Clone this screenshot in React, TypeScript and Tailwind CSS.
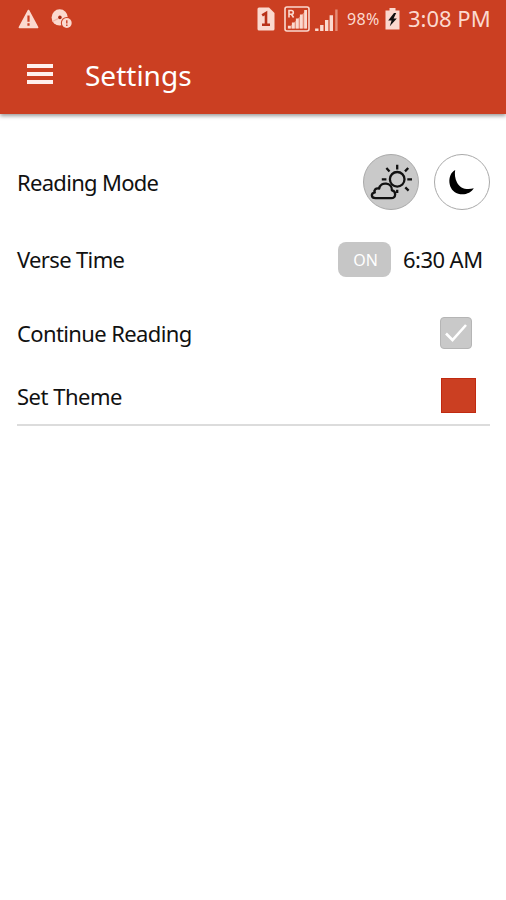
import { useState } from 'react'
import type React from 'react'

const WarningIcon = () => (
  <svg width="21" height="20" viewBox="0 0 21 20">
    <path d="M10.5 1.5L19.6 18.5H1.4Z" fill="#fbd9cf" stroke="#fbd9cf" strokeWidth="1.6" strokeLinejoin="round" />
    <path d="M10.5 6.5v6.2M10.5 14.3v2.4" stroke="#cb3f22" strokeWidth="2.2" />
  </svg>
)

const DiscIcon = () => (
  <svg width="22" height="20" viewBox="0 0 22 20">
    <circle cx="8.7" cy="8.4" r="8.1" fill="#fbd9cf" />
    <circle cx="8.9" cy="8.4" r="1.8" fill="#a92a14" />
    <path d="M1.5 12.5L7 9.6" stroke="#f0b3a4" strokeWidth="1.2" />
    <circle cx="15.8" cy="14" r="6" fill="#cb3f22" />
    <circle cx="15.8" cy="14" r="4.9" fill="#fbd9cf" />
    <path d="M15.8 11.2v3.4M15.8 15.4v1.6" stroke="#cb3f22" strokeWidth="1.4" />
  </svg>
)

const SimIcon = () => (
  <svg width="18" height="24" viewBox="0 0 18 24">
    <path d="M2 .5H12L17.5 6V22Q17.5 23.5 16 23.5H2Q.5 23.5 .5 22V2Q.5 .5 2 .5Z" fill="#fbd9cf" />
    <path d="M5.2 8.4L9 6V17.4M5 17.8H13" fill="none" stroke="#b93118" strokeWidth="2.6" />
  </svg>
)

const RoamingIcon = () => (
  <svg width="26" height="26" viewBox="0 0 26 26">
    <rect x="1" y="1" width="24" height="24" rx="2" fill="none" stroke="#fbd9cf" strokeWidth="1.6" />
    <path d="M5 11.5V4.5H7.4a1.8 1.8 0 0 1 0 3.8H5M7.4 8.3L9.6 11.5" fill="none" stroke="#fbd9cf" strokeWidth="1.6" />
    <path d="M4 22.5L22.5 4V22.5Z" fill="#e58b76" />
    <path d="M5.3 22.5V19.8M9.3 22.5V16.5M13.3 22.5V12.5M17.3 22.5V8.5M21.6 22.5V4" stroke="#fbd9cf" strokeWidth="2.8" />
  </svg>
)

const SignalIcon = () => (
  <svg width="23" height="23" viewBox="0 0 23 23">
    <path d="M1.8 22V19.5M6.8 22V16M11.7 22V11M16.3 22V6.2" stroke="#fbd9cf" strokeWidth="3.4" />
    <path d="M21.4 22V.5" stroke="#e58b76" strokeWidth="2.4" />
  </svg>
)

const BatteryIcon = () => (
  <svg width="15" height="22" viewBox="0 0 15 22">
    <path d="M4.5 0H10.5V2.5H14.5V21.5H.5V2.5H4.5Z" fill="#fbd9cf" />
    <path d="M9 5L3.2 12.4H6.6L4.8 18.2L11.8 10.4H8.6L11.2 5Z" fill="#111" />
  </svg>
)

const DayIcon = () => (
  <svg width="54" height="54" viewBox="1 1 54 54" fill="none" stroke="#111" strokeWidth="2.3">
    <circle cx="34.2" cy="25.3" r="7.3" />
    <path d="M34.2 10.8V15.6M34.2 35.8V39M18.8 25.3H23.4M44.3 25.3H49M23.4 14L26.5 17.4M45.2 14L42 17.4M42.3 33.4L45.6 36.6" />
    <path
      d="M12.5 44.2H28.2C33.2 44.2 33.5 37 28.9 36.4C29.4 28.3 17.5 27 16.2 34.6C12.5 33.8 10.8 36.3 11.8 38.4C7.6 39.4 8 44.2 12.5 44.2Z"
      fill="#c9c9c9"
      strokeLinejoin="round"
    />
  </svg>
)

const NightIcon = () => (
  <svg width="54" height="54" viewBox="1 1 54 54">
    <path d="M21.2 16C12.5 20.5 13.6 36.8 24.2 39.8C30.5 41.6 37.2 39 39.8 34.3C32.5 36.4 25.8 34.3 23 28.5C21 24.5 20.4 20 21.2 16Z" fill="#000" />
  </svg>
)

const StatusBar = () => (
  <div className="flex h-[38px] items-center pl-[18px] pr-4 text-[#fbd9cf]">
    <WarningIcon />
    <div className="ml-3"><DiscIcon /></div>
    <div className="ml-auto flex items-center">
      <SimIcon />
      <div className="ml-[9px]"><RoamingIcon /></div>
      <div className="ml-[5px] mt-0.5"><SignalIcon /></div>
      <span className="-mt-px ml-[9px] w-[33px] whitespace-nowrap text-base tracking-[0.4px]">98%</span>
      <div className="ml-[5px]"><BatteryIcon /></div>
      <span className="-mt-0.5 ml-2 w-[82px] whitespace-nowrap text-[22px]">3:08 PM</span>
    </div>
  </div>
)

const Row = ({ label, className, children }: { label: string; className: string; children: React.ReactNode }) => (
  <div className={`flex items-center justify-between ${className}`}>
    <span className="text-[22px]">{label}</span>
    {children}
  </div>
)

const App = () => {
  const [mode, setMode] = useState<'day' | 'night'>('day')
  const [verseOn, setVerseOn] = useState(true)
  const [keepReading, setKeepReading] = useState(true)

  return (
    <div className="h-[900px] w-full overflow-hidden bg-white font-['Noto_Sans',sans-serif] leading-none text-[#111]">
      <header className="h-[114px] bg-[#cb3f22] shadow-[0_2px_4px_rgba(0,0,0,0.4)]">
        <StatusBar />
        <div className="flex h-[76px] items-center pl-[27px] text-white">
          <button className="-mt-1 flex flex-col gap-1" aria-label="Menu">
            <span className="h-1 w-[26px] bg-[#fff0ed]" />
            <span className="h-1 w-[26px] bg-[#fff0ed]" />
            <span className="h-1 w-[26px] bg-[#fff0ed]" />
          </button>
          <h1 className="-mt-0.5 ml-8 text-[28px]">Settings</h1>
        </div>
      </header>
      <main className="pl-[17px] pr-4 pt-[29px]">
        <Row label="Reading Mode" className="h-[78px] tracking-[-0.7px]">
          <div className="flex gap-[15px]">
            <button
              aria-label="Day"
              onClick={() => setMode('day')}
              className={`size-14 rounded-full border border-[#aaa] ${mode === 'day' ? 'bg-[#c9c9c9]' : 'bg-white'}`}
            >
              <DayIcon />
            </button>
            <button
              aria-label="Night"
              onClick={() => setMode('night')}
              className={`size-14 rounded-full border border-[#aaa] ${mode === 'night' ? 'bg-[#c9c9c9]' : 'bg-white'}`}
            >
              <NightIcon />
            </button>
          </div>
        </Row>
        <Row label="Verse Time" className="h-[76px] tracking-[-0.65px]">
          <div className="flex items-center pr-[7px]">
            <button onClick={() => setVerseOn(!verseOn)} className="h-[35px] w-[53px] rounded-lg bg-[#c6c6c6] pl-0.5 pt-0.5 text-base tracking-normal text-white">
              {verseOn ? 'ON' : 'OFF'}
            </button>
            <span className="ml-3 w-20 whitespace-nowrap text-[22px] tracking-[-0.55px]">6:30 AM</span>
          </div>
        </Row>
        <Row label="Continue Reading" className="h-[71px] tracking-[-0.62px]">
          <button
            aria-label="Continue Reading"
            onClick={() => setKeepReading(!keepReading)}
            className="mr-[18px] size-8 rounded-[4px] border border-[#b5b5b5] bg-[#c9c9c9]"
          >
            {keepReading && (
              <svg width="30" height="30" viewBox="0 0 30 30">
                <path d="M5 15.5L11.5 22L25 7" fill="none" stroke="#fff" strokeWidth="2.6" />
              </svg>
            )}
          </button>
        </Row>
        <Row label="Set Theme" className="h-[58px] border-b-2 border-[#dcdcdc] tracking-[-0.5px]">
          <button aria-label="Theme colour" className="-mt-0.5 mr-3.5 size-[35px] border border-[#c02a10] bg-[#cb3f22]" />
        </Row>
      </main>
    </div>
  )
}

export default App
